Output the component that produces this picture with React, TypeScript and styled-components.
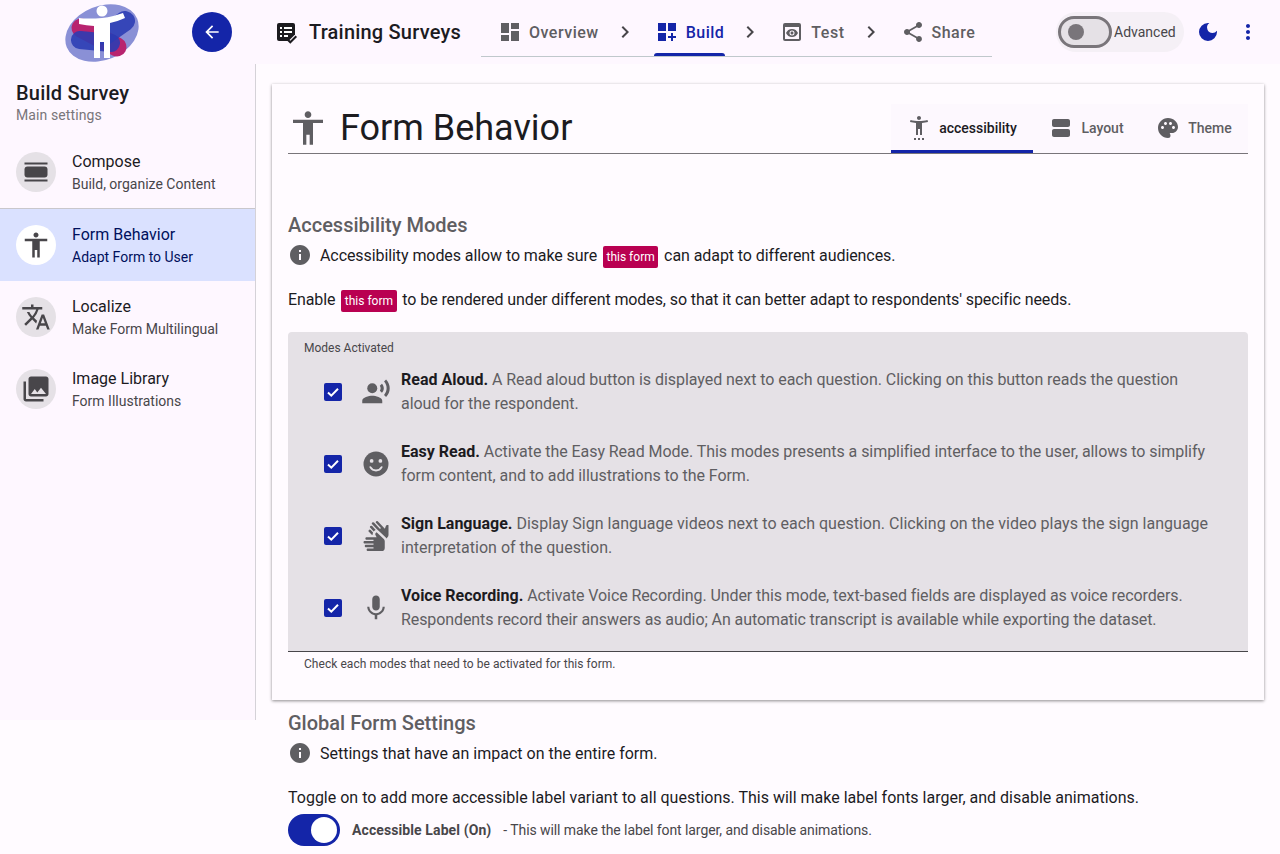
import React from 'react'
import styled, { createGlobalStyle } from 'styled-components'
import {
  MdAccessibility,
  MdArrowBack,
  MdChevronRight,
  MdDarkMode,
  MdDashboard,
  MdDashboardCustomize,
  MdInfo,
  MdMic,
  MdMoreVert,
  MdPalette,
  MdPhotoLibrary,
  MdPreview,
  MdRecordVoiceOver,
  MdSettingsAccessibility,
  MdShare,
  MdSignLanguage,
  MdTranslate,
  MdViewAgenda,
} from 'react-icons/md'

const blue = '#1425a8'
const grey = '#5f5e62'
const ink = '#1c1b1f'
const panel = '#e5e1e6'

const GlobalStyle = createGlobalStyle`
  html, body {
    margin: 0;
    height: 854px;
    overflow: hidden;
    background: #fffbff;
    color: ${ink};
    font-family: Roboto, "Liberation Sans", sans-serif;
  }
  * { box-sizing: border-box; }
`

const Header = styled.header`
  display: flex;
  align-items: center;
  height: 64px;
  background: #fef7ff;
`

const LogoSlot = styled.div`
  display: flex;
  width: 192px;
  padding-left: 65px;
  padding-top: 2px;
`

const BackButton = styled.div`
  display: flex;
  align-items: center;
  justify-content: center;
  width: 40px;
  height: 40px;
  border-radius: 50%;
  background: ${blue};
  color: #fff;
  font-size: 20px;
`

const AppTitle = styled.div`
  display: flex;
  align-items: center;
  width: 207px;
  margin-left: 42px;
  gap: 11px;
  font-size: 20px;
  font-weight: 500;
  letter-spacing: 0.2px;
`

const StepNav = styled.nav`
  display: flex;
  align-items: center;
  width: 511px;
  height: 49px;
  margin-top: 1px;
  padding: 0 16px 0 17px;
  border-bottom: 1px solid #c0c8cc;
`

const Step = styled.div<{ $active?: boolean }>`
  position: relative;
  display: flex;
  align-items: center;
  gap: 7px;
  height: 48px;
  font-size: 16px;
  font-weight: 500;
  letter-spacing: 0.5px;
  color: ${(p) => (p.$active ? blue : grey)};
  svg { font-size: 24px; }
  ${(p) =>
    p.$active &&
    `&::after {
      content: '';
      position: absolute;
      left: -1px;
      right: -1px;
      bottom: 0;
      height: 3px;
      border-radius: 3px 3px 0 0;
      background: ${blue};
    }`}
`

const StepChevron = styled.div<{ $width: number }>`
  display: flex;
  justify-content: center;
  width: ${(p) => p.$width}px;
  padding-right: 4px;
  color: #48464a;
  font-size: 24px;
`

const AdvancedPill = styled.div`
  display: flex;
  align-items: center;
  gap: 2px;
  width: 128px;
  height: 40px;
  margin-left: 64px;
  padding-left: 2px;
  border-radius: 20px;
  background: #f5f0f6;
  font-size: 14px;
  color: #48464a;
`

const OutlineSwitch = styled.div`
  display: flex;
  align-items: center;
  width: 54px;
  height: 32px;
  padding-left: 7px;
  border: 3px solid #79757a;
  border-radius: 16px;
  background: ${panel};
  &::before {
    content: '';
    width: 16px;
    height: 16px;
    border-radius: 50%;
    background: #79757a;
  }
`

const HeaderIcon = styled.div<{ $gap: number }>`
  display: flex;
  justify-content: center;
  width: 24px;
  margin-left: ${(p) => p.$gap}px;
  color: ${blue};
  font-size: 24px;
`

const Body = styled.div`
  display: flex;
  align-items: flex-start;
`

const Sidebar = styled.aside`
  width: 256px;
  height: 656px;
  flex: none;
  background: #fef7ff;
  border-right: 1px solid #d5d2d8;
`

const SideHead = styled.div`
  height: 73px;
  padding: 16px 16px 0;
`

const SideTitle = styled.div`
  font-size: 20px;
  line-height: 26px;
  font-weight: 500;
  letter-spacing: 0.2px;
`

const SideSub = styled.div`
  font-size: 14px;
  line-height: 18px;
  letter-spacing: 0.1px;
  color: #79757a;
`

const SideItem = styled.div<{ $active?: boolean; $divider?: boolean }>`
  display: flex;
  align-items: center;
  gap: 16px;
  height: 72px;
  padding: 0 16px ${(p) => (p.$divider ? '1px' : '0')};
  background: ${(p) => (p.$active ? '#dae1ff' : 'transparent')};
  color: ${(p) => (p.$active ? '#00105c' : ink)};
  border-bottom: ${(p) => (p.$divider ? '1px solid #c9c7cc' : 'none')};
`

const SideCircle = styled.div<{ $active?: boolean }>`
  display: flex;
  align-items: center;
  justify-content: center;
  width: 40px;
  height: 40px;
  flex: none;
  border-radius: 50%;
  background: ${(p) => (p.$active ? '#fff' : panel)};
  color: #48464a;
  font-size: 30px;
  svg { flex: none; }
`

const ItemTitle = styled.div`
  font-size: 16px;
  line-height: 25px;
`

const ItemSub = styled.div<{ $active?: boolean }>`
  font-size: 14px;
  line-height: 21px;
  color: ${(p) => (p.$active ? '#00105c' : '#48464a')};
`

const Main = styled.main`
  flex: 1;
  padding: 20px 16px 0;
`

const Card = styled.section`
  height: 616px;
  padding: 20px 16px 0;
  background: #fffbff;
  box-shadow: 0 1px 3px rgba(0, 0, 0, 0.45);
`

const TitleBar = styled.div`
  display: flex;
  justify-content: space-between;
  align-items: flex-start;
  height: 50px;
  border-bottom: 1px solid #79757a;
`

const PageTitle = styled.h1`
  display: flex;
  align-items: center;
  gap: 12px;
  height: 48px;
  margin: 0;
  font-size: 36px;
  font-weight: 400;
  svg { color: #5f5e62; font-size: 40px; }
`

const Tabs = styled.div`
  display: flex;
  height: 49px;
  background: #fdf8fe;
`

const Tab = styled.div<{ $active?: boolean; $width: number }>`
  display: flex;
  align-items: center;
  justify-content: center;
  gap: 8px;
  width: ${(p) => p.$width}px;
  height: 49px;
  padding-top: 2px;
  font-size: 14px;
  font-weight: 500;
  color: ${(p) => (p.$active ? ink : grey)};
  border-bottom: 3px solid ${(p) => (p.$active ? blue : 'transparent')};
  svg { color: #5f5e62; font-size: 24px; }
`

const SectionTitle = styled.h2<{ $top: number }>`
  margin: ${(p) => p.$top}px 0 0;
  font-size: 20px;
  line-height: 28px;
  font-weight: 500;
  color: ${grey};
`

const InfoRow = styled.div`
  display: flex;
  align-items: center;
  gap: 8px;
  height: 32px;
  font-size: 16px;
  svg { color: #5f5e62; font-size: 24px; flex: none; }
`

const InfoText = styled.span`
  letter-spacing: -0.08px;
`

const Paragraph = styled.p`
  height: 32px;
  margin: 12px 0 0;
  font-size: 16px;
  line-height: 34px;
  letter-spacing: -0.1px;
`

const FormChip = styled.span`
  margin: 0 2px;
  padding: 4px 3.5px;
  border-radius: 2px;
  background: #b90051;
  color: #fff;
  font-size: 12px;
  letter-spacing: 0;
`

const ModesPanel = styled.div`
  height: 320px;
  margin-top: 17px;
  padding-top: 8px;
  border-radius: 4px 4px 0 0;
  background: ${panel};
  border-bottom: 1px solid #48464a;
`

const PanelLabel = styled.div`
  height: 16px;
  padding-left: 16px;
  font-size: 12px;
  line-height: 16px;
  color: #48464a;
`

const ModeRow = styled.div`
  display: flex;
  align-items: center;
  height: 72px;
  padding-left: 36px;
`

const CheckBox = styled.div`
  display: flex;
  align-items: center;
  justify-content: center;
  width: 18px;
  height: 18px;
  flex: none;
  border-radius: 2px;
  background: ${blue};
`

const ModeIcon = styled.div`
  display: flex;
  align-items: center;
  justify-content: center;
  width: 30px;
  margin-left: 19px;
  flex: none;
  color: #5f5e62;
  font-size: 30px;
`

const ModeText = styled.div<{ $tracking: number }>`
  width: 815px;
  margin-left: 10px;
  font-size: 16px;
  line-height: 24px;
  letter-spacing: ${(p) => p.$tracking}px;
  color: #5f5e62;
  b { font-weight: 700; letter-spacing: 0; color: ${ink}; }
`

const HelperText = styled.div`
  padding: 4px 16px 0;
  font-size: 12px;
  line-height: 16px;
  letter-spacing: 0.05px;
  color: #48464a;
`

const GlobalSettings = styled.section`
  padding: 0 16px;
`

const ToggleIntro = styled(Paragraph)`
  letter-spacing: 0;
`

const ToggleRow = styled.div`
  display: flex;
  align-items: center;
  margin-top: 1px;
  font-size: 14px;
`

const OnSwitch = styled.div`
  display: flex;
  align-items: center;
  justify-content: flex-end;
  width: 52px;
  height: 32px;
  padding-right: 3px;
  border-radius: 16px;
  background: ${blue};
  &::after {
    content: '';
    width: 26px;
    height: 26px;
    border-radius: 50%;
    background: #fff;
  }
`

const ToggleLabel = styled.span`
  margin-left: 12px;
  font-weight: 700;
  letter-spacing: 0.1px;
  color: #48464a;
`

const ToggleHint = styled.span`
  margin-left: 12px;
  letter-spacing: -0.08px;
  color: #48464a;
`

const Logo = () => (
  <svg width="74" height="60" viewBox="0 0 74 60" aria-hidden="true">
    <ellipse cx="37" cy="30" rx="38" ry="27" fill="#8a90d6" transform="rotate(-22 37 30)" />
    <line x1="16" y1="25" x2="52" y2="44" stroke="#b8246f" strokeWidth="19" strokeLinecap="round" />
    <line x1="15" y1="37" x2="46" y2="40" stroke="#2b3cb4" strokeWidth="18" strokeLinecap="round" opacity="0.88" />
    <line x1="40" y1="32" x2="60" y2="18" stroke="#2b3cb4" strokeWidth="20" strokeLinecap="round" opacity="0.88" />
    <circle cx="37" cy="8" r="5.5" fill="#fff" />
    <path
      d="M14 15C22 16 30 15.500 37 15C45 14.500 52 12 58 10L60 15C55 17 50 19 45 20V55H39V39H35V55H29V23C24 22.500 19 22 14 21Z"
      fill="#fff"
    />
  </svg>
)

const SurveyIcon = () => (
  <svg width="24" height="24" viewBox="0 0 24 24" aria-hidden="true">
    <path d="M5 3h14a2 2 0 0 1 2 2v9.500L14.500 21H5a2 2 0 0 1-2-2V5a2 2 0 0 1 2-2z" fill={ink} />
    <path d="M6 7h2v2H6zM10 7h8v2h-8zM6 11h2v2H6zM10 11h8v2h-8zM6 15h2v2H6zM10 15h4v2h-4z" fill="#fff" />
    <path d="M13.500 19.500l2.800 2.800 6-6" fill="none" stroke={ink} strokeWidth="2" />
  </svg>
)

const ComposeIcon = () => (
  <svg width="30" height="30" viewBox="0 0 30 30" fill="#48464a" aria-hidden="true">
    <rect x="3.500" y="5.500" width="23" height="2" />
    <rect x="3.500" y="9.500" width="23" height="11" rx="3" />
    <rect x="3.500" y="22.500" width="23" height="2" />
  </svg>
)

const SmileIcon = () => (
  <svg width="30" height="30" viewBox="0 0 24 24" aria-hidden="true">
    <circle cx="12" cy="12" r="10" fill={grey} />
    <circle cx="8.500" cy="9.500" r="1.500" fill={panel} />
    <circle cx="15.500" cy="9.500" r="1.500" fill={panel} />
    <path d="M7.500 14.500c1 1.800 2.600 2.700 4.500 2.700s3.500-.9 4.500-2.700" fill="none" stroke={panel} strokeWidth="1.500" strokeLinecap="round" />
  </svg>
)

const Tick = () => (
  <svg width="14" height="14" viewBox="0 0 14 14" aria-hidden="true">
    <path d="M2 7.500l3.300 3.200L12 3.800" fill="none" stroke="#fff" strokeWidth="2" />
  </svg>
)

const sideItems = [
  { title: 'Compose', sub: 'Build, organize Content', icon: <ComposeIcon />, divider: true },
  { title: 'Form Behavior', sub: 'Adapt Form to User', icon: <MdAccessibility />, active: true },
  { title: 'Localize', sub: 'Make Form Multilingual', icon: <MdTranslate /> },
  { title: 'Image Library', sub: 'Form Illustrations', icon: <MdPhotoLibrary /> },
]

const modes = [
  {
    name: 'Read Aloud.',
    text: ' A Read aloud button is displayed next to each question. Clicking on this button reads the question aloud for the respondent.',
    icon: <MdRecordVoiceOver />,
    tracking: -0.05,
  },
  {
    name: 'Easy Read.',
    text: ' Activate the Easy Read Mode. This modes presents a simplified interface to the user, allows to simplify form content, and to add illustrations to the Form.',
    icon: <SmileIcon />,
    tracking: -0.06,
  },
  {
    name: 'Sign Language.',
    text: ' Display Sign language videos next to each question. Clicking on the video plays the sign language interpretation of the question.',
    icon: <MdSignLanguage />,
    tracking: 0.02,
  },
  {
    name: 'Voice Recording.',
    text: ' Activate Voice Recording. Under this mode, text-based fields are displayed as voice recorders. Respondents record their answers as audio; An automatic transcript is available while exporting the dataset.',
    icon: <MdMic />,
    tracking: -0.09,
  },
]

const App = () => (
  <>
    <GlobalStyle />
    <Header>
      <LogoSlot>
        <Logo />
      </LogoSlot>
      <BackButton>
        <MdArrowBack />
      </BackButton>
      <AppTitle>
        <SurveyIcon />
        Training Surveys
      </AppTitle>
      <StepNav>
        <Step>
          <MdDashboard />
          Overview
        </Step>
        <StepChevron $width={56}>
          <MdChevronRight />
        </StepChevron>
        <Step $active>
          <MdDashboardCustomize />
          Build
        </Step>
        <StepChevron $width={56}>
          <MdChevronRight />
        </StepChevron>
        <Step>
          <MdPreview />
          Test
        </Step>
        <StepChevron $width={56}>
          <MdChevronRight />
        </StepChevron>
        <Step>
          <MdShare />
          Share
        </Step>
      </StepNav>
      <AdvancedPill>
        <OutlineSwitch />
        Advanced
      </AdvancedPill>
      <HeaderIcon $gap={12}>
        <MdDarkMode />
      </HeaderIcon>
      <HeaderIcon $gap={16}>
        <MdMoreVert />
      </HeaderIcon>
    </Header>
    <Body>
      <Sidebar>
        <SideHead>
          <SideTitle>Build Survey</SideTitle>
          <SideSub>Main settings</SideSub>
        </SideHead>
        {sideItems.map((item) => (
          <SideItem key={item.title} $active={item.active} $divider={item.divider}>
            <SideCircle $active={item.active}>{item.icon}</SideCircle>
            <div>
              <ItemTitle>{item.title}</ItemTitle>
              <ItemSub $active={item.active}>{item.sub}</ItemSub>
            </div>
          </SideItem>
        ))}
      </Sidebar>
      <Main>
        <Card>
          <TitleBar>
            <PageTitle>
              <MdAccessibility />
              Form Behavior
            </PageTitle>
            <Tabs>
              <Tab $active $width={142}>
                <MdSettingsAccessibility />
                accessibility
              </Tab>
              <Tab $width={107}>
                <MdViewAgenda />
                Layout
              </Tab>
              <Tab $width={108}>
                <MdPalette />
                Theme
              </Tab>
            </Tabs>
          </TitleBar>
          <SectionTitle $top={57}>Accessibility Modes</SectionTitle>
          <InfoRow>
            <MdInfo />
            <InfoText>
              Accessibility modes allow to make sure <FormChip>this form</FormChip> can adapt to different audiences.
            </InfoText>
          </InfoRow>
          <Paragraph>
            Enable <FormChip>this form</FormChip> to be rendered under different modes, so that it can better adapt to
            respondents' specific needs.
          </Paragraph>
          <ModesPanel>
            <PanelLabel>Modes Activated</PanelLabel>
            {modes.map((mode) => (
              <ModeRow key={mode.name}>
                <CheckBox>
                  <Tick />
                </CheckBox>
                <ModeIcon>{mode.icon}</ModeIcon>
                <ModeText $tracking={mode.tracking}>
                  <b>{mode.name}</b>
                  {mode.text}
                </ModeText>
              </ModeRow>
            ))}
          </ModesPanel>
          <HelperText>Check each modes that need to be activated for this form.</HelperText>
        </Card>
        <GlobalSettings>
          <SectionTitle $top={9}>Global Form Settings</SectionTitle>
          <InfoRow>
            <MdInfo />
            Settings that have an impact on the entire form.
          </InfoRow>
          <ToggleIntro>
            Toggle on to add more accessible label variant to all questions. This will make label fonts larger, and
            disable animations.
          </ToggleIntro>
          <ToggleRow>
            <OnSwitch />
            <ToggleLabel>Accessible Label (On)</ToggleLabel>
            <ToggleHint>- This will make the label font larger, and disable animations.</ToggleHint>
          </ToggleRow>
        </GlobalSettings>
      </Main>
    </Body>
  </>
)

export default App
